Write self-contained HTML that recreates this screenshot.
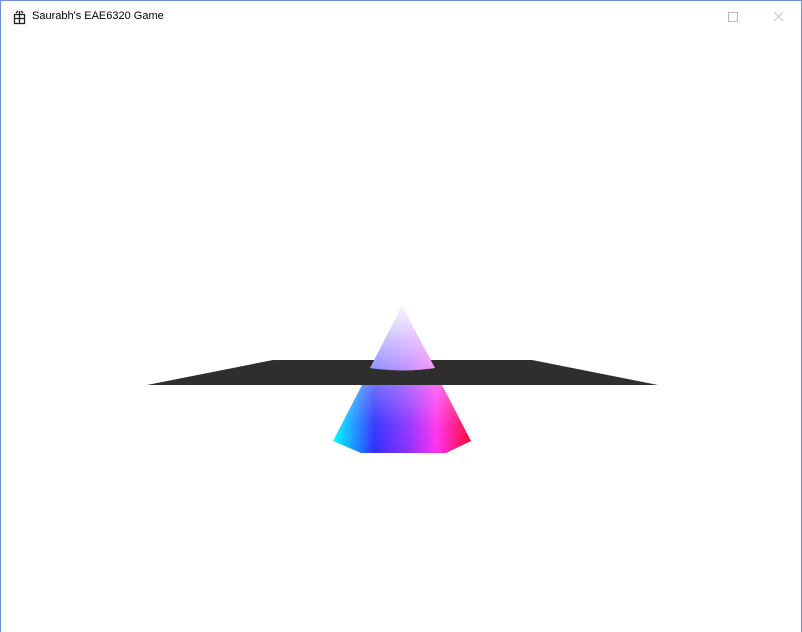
<!DOCTYPE html>
<html><head><meta charset="utf-8"><style>
html,body{margin:0;padding:0;width:802px;height:632px;overflow:hidden;background:#fff}
.win{position:absolute;left:0;top:0;width:800px;height:631px;border:1px solid #6d8fd6;border-bottom:none;background:#fff}
.title{position:absolute;left:31px;top:9px;font:11px "Liberation Sans",sans-serif;color:#000}
</style></head><body>
<div class="win">
<svg width="800" height="631" style="position:absolute;left:0;top:0">
  <g fill="none" stroke="#222" stroke-width="1.3">
    <rect x="13.5" y="13.5" width="10" height="9"/>
    <line x1="18.5" y1="10" x2="18.5" y2="22"/>
    <line x1="13.5" y1="17.5" x2="23.5" y2="17.5"/>
    <path d="M15 12 L17 10 M22 12 L20 10"/>
  </g>
  <rect x="727.5" y="11.5" width="9" height="9" fill="none" stroke="#bbb"/>
  <path d="M773 11 L782 20 M782 11 L773 20" stroke="#c8c8c8" stroke-width="1.2"/>
  <defs>
    <linearGradient id="h" x1="332" y1="0" x2="470" y2="0" gradientUnits="userSpaceOnUse">
      <stop offset="0" stop-color="#00ffff"/>
      <stop offset="0.3" stop-color="#3030ff"/>
      <stop offset="0.55" stop-color="#9030ff"/>
      <stop offset="0.75" stop-color="#ff30f0"/>
      <stop offset="1" stop-color="#ff0030"/>
    </linearGradient>
    <linearGradient id="v" x1="0" y1="306" x2="0" y2="372" gradientUnits="userSpaceOnUse">
      <stop offset="0" stop-color="#fff" stop-opacity="0.95"/>
      <stop offset="1" stop-color="#fff" stop-opacity="0.45"/>
    </linearGradient>
    <linearGradient id="v2" x1="0" y1="384" x2="0" y2="452" gradientUnits="userSpaceOnUse">
      <stop offset="0" stop-color="#fff" stop-opacity="0.3"/>
      <stop offset="0.6" stop-color="#fff" stop-opacity="0.05"/>
      <stop offset="1" stop-color="#fff" stop-opacity="0"/>
    </linearGradient>
  </defs>
  <polygon points="361,384 441,384 470,440 445,452 360,452 332,440" fill="url(#h)"/>
  <polygon points="361,384 441,384 470,440 445,452 360,452 332,440" fill="url(#v2)"/>
  <polygon points="272,359 531,359 657,384 146,384" fill="#2e2e2e"/>
  <path d="M401,306 L434,367 Q401,372 369,367 Z" fill="url(#h)"/>
  <path d="M401,306 L434,367 Q401,372 369,367 Z" fill="url(#v)"/>
</svg>
<div class="title">Saurabh's EAE6320 Game</div>
</div>
</body></html>
